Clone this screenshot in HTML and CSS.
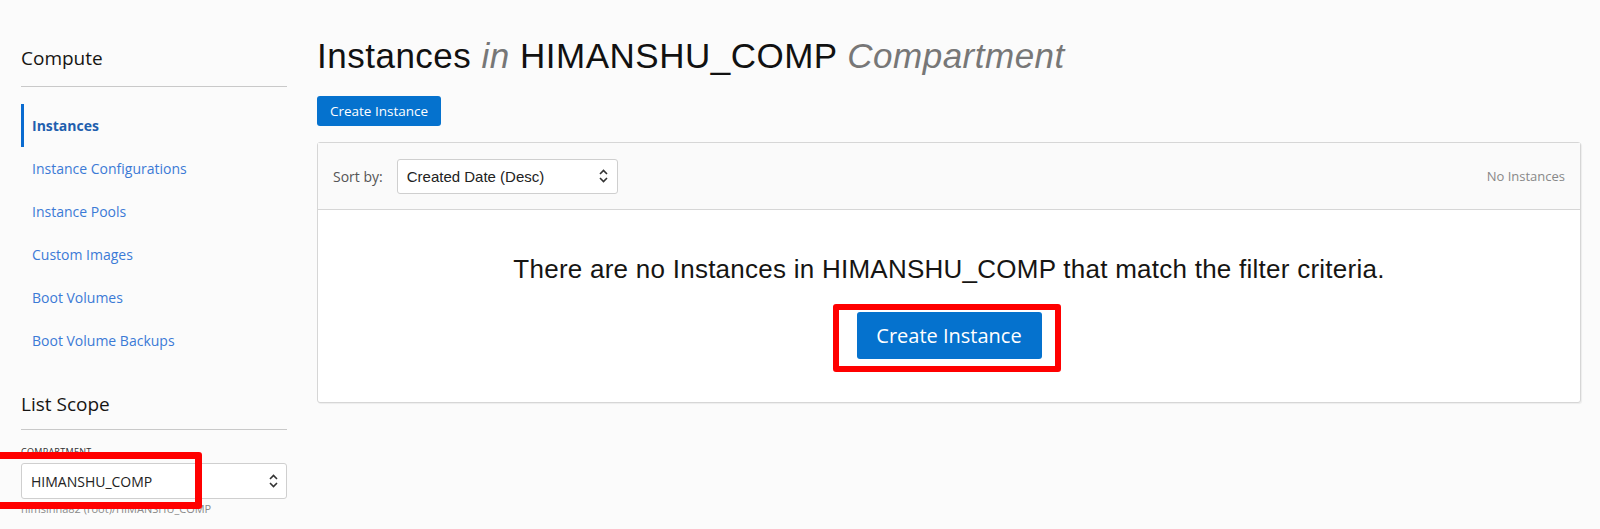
FILE: index.html
```html
<!DOCTYPE html>
<html lang="en">
<head>
<meta charset="utf-8">
<title>Instances</title>
<link rel="stylesheet" href="styles.css">
</head>
<body>
<div class="page">
  <aside class="sidebar">
    <h2 class="side-title">Compute</h2>
    <ul class="nav">
      <li class="nav-item active">Instances</li>
      <li class="nav-item">Instance Configurations</li>
      <li class="nav-item">Instance Pools</li>
      <li class="nav-item">Custom Images</li>
      <li class="nav-item">Boot Volumes</li>
      <li class="nav-item">Boot Volume Backups</li>
    </ul>
    <h2 class="side-title scope">List Scope</h2>
    <div class="field">
      <div class="field-label">COMPARTMENT</div>
      <div class="select compartment">
        <span>HIMANSHU_COMP</span>
        <svg class="chev" width="9" height="14" viewBox="0 0 9 14"><path d="M1 5 L4.5 1.5 L8 5 M1 9 L4.5 12.5 L8 9" fill="none" stroke="#333" stroke-width="1.6"/></svg>
        <div class="mark mark-left"></div>
      </div>
      <div class="field-help">himsinha82 (root)/HIMANSHU_COMP</div>
    </div>
  </aside>
  <main class="main">
    <h1 class="title">Instances <em>in</em> HIMANSHU_COMP <em>Compartment</em></h1>
    <button class="btn btn-small">Create Instance</button>
    <section class="panel">
      <div class="panel-head">
        <label class="sort-label">Sort by:</label>
        <div class="select sort">
          <span>Created Date (Desc)</span>
          <svg class="chev" width="9" height="14" viewBox="0 0 9 14"><path d="M1 5 L4.5 1.5 L8 5 M1 9 L4.5 12.5 L8 9" fill="none" stroke="#333" stroke-width="1.6"/></svg>
        </div>
        <div class="count">No Instances</div>
      </div>
      <div class="panel-body">
        <p class="empty">There are no Instances in HIMANSHU_COMP that match the filter criteria.</p>
        <div class="btn-wrap">
          <button class="btn btn-large">Create Instance</button>
          <div class="mark mark-center"></div>
        </div>
      </div>
    </section>
  </main>
</div>
</body>
</html>
```
FILE: styles.css
```css
* { box-sizing: border-box; }
html, body { margin: 0; padding: 0; }
body {
  background: #fbfbfb;
  font-family: "Open Sans", "Noto Sans", sans-serif;
  color: #222;
  width: 1600px;
  height: 529px;
  overflow: hidden;
}
.page {
  display: flex;
}
.sidebar {
  width: 287px;
  padding-left: 21px;
  padding-top: 46px;
  flex: none;
}
.side-title {
  margin: 0;
  font-size: 19px;
  line-height: 24px;
  font-weight: 400;
  color: #161513;
  padding-bottom: 16px;
  border-bottom: 1px solid #c9c9c9;
}
.side-title.scope {
  margin-top: 30px;
  padding-bottom: 13px;
}
.nav {
  list-style: none;
  margin: 17px 0 0;
  padding: 0;
}
.nav-item {
  height: 43px;
  line-height: 43px;
  font-size: 14px;
  color: #3b7ad6;
  padding-left: 8px;
  border-left: 3px solid transparent;
}
.nav-item.active {
  border-left-color: #0a6bd0;
  font-weight: 700;
  color: #1f5fae;
}
.field {
  margin-top: 16px;
}
.field-label {
  font-size: 9px;
  line-height: 12px;
  color: #333;
  letter-spacing: 0.3px;
}
.select {
  position: relative;
  display: flex;
  align-items: center;
  justify-content: space-between;
  background: #fff;
  border: 1px solid #cfcfcf;
  border-radius: 3px;
}
.select .chev { flex: none; }
.compartment {
  margin-top: 5px;
  height: 36px;
  padding: 0 8px 0 9px;
  font-size: 14px;
  color: #222;
}
.field-help {
  font-size: 11px;
  color: #8a8a8a;
  margin-top: 2px;
}
.mark {
  position: absolute;
  border: 7px solid #ff0000;
  border-radius: 3px;
  pointer-events: none;
}
.mark-left {
  left: -40px;
  top: -12px;
  width: 220px;
  height: 57px;
}
.main {
  flex: 1;
  padding: 36px 19px 0 30px;
}
.title {
  margin: 0;
  font-family: "Liberation Sans", Arial, sans-serif;
  font-size: 35px;
  letter-spacing: 0.5px;
  line-height: 40px;
  font-weight: 400;
  color: #111;
}
.title em {
  color: #777;
  font-style: italic;
}
.btn {
  display: inline-block;
  background: #0572ce;
  color: #fff;
  border: none;
  border-radius: 3px;
  font-family: "Open Sans", "Noto Sans", sans-serif;
  cursor: pointer;
}
.btn-small {
  margin-top: 20px;
  width: 124px;
  height: 30px;
  font-size: 13.5px;
  padding: 0;
}
.panel {
  margin-top: 16px;
  border: 1px solid #d6d6d6;
  border-radius: 3px;
  background: #fff;
  box-shadow: 1px 1px 1px rgba(0,0,0,0.06);
}
.panel-head {
  display: flex;
  align-items: center;
  height: 67px;
  padding: 0 15px;
  background: #fafafa;
  border-bottom: 1px solid #d6d6d6;
}
.sort-label {
  font-size: 14px;
  color: #555;
  margin-right: 14px;
}
.sort {
  width: 221px;
  height: 35px;
  padding: 0 9px 0 9px;
  font-family: "Liberation Sans", Arial, sans-serif;
  font-size: 15px;
  color: #222;
}
.count {
  margin-left: auto;
  font-size: 13px;
  color: #888;
}
.panel-body {
  padding: 45px 0 43px;
  display: flex;
  flex-direction: column;
  align-items: center;
}
.empty {
  margin: 0;
  font-family: "Liberation Sans", Arial, sans-serif;
  font-size: 26px;
  letter-spacing: 0.25px;
  line-height: 28px;
  color: #161513;
}
.btn-wrap {
  position: relative;
  margin-top: 29px;
}
.btn-large {
  display: block;
  width: 185px;
  height: 47px;
  font-size: 20px;
  padding: 0;
}
.mark-center {
  left: -24px;
  top: -8px;
  right: -19px;
  bottom: -13px;
  border-width: 6px;
}
```
